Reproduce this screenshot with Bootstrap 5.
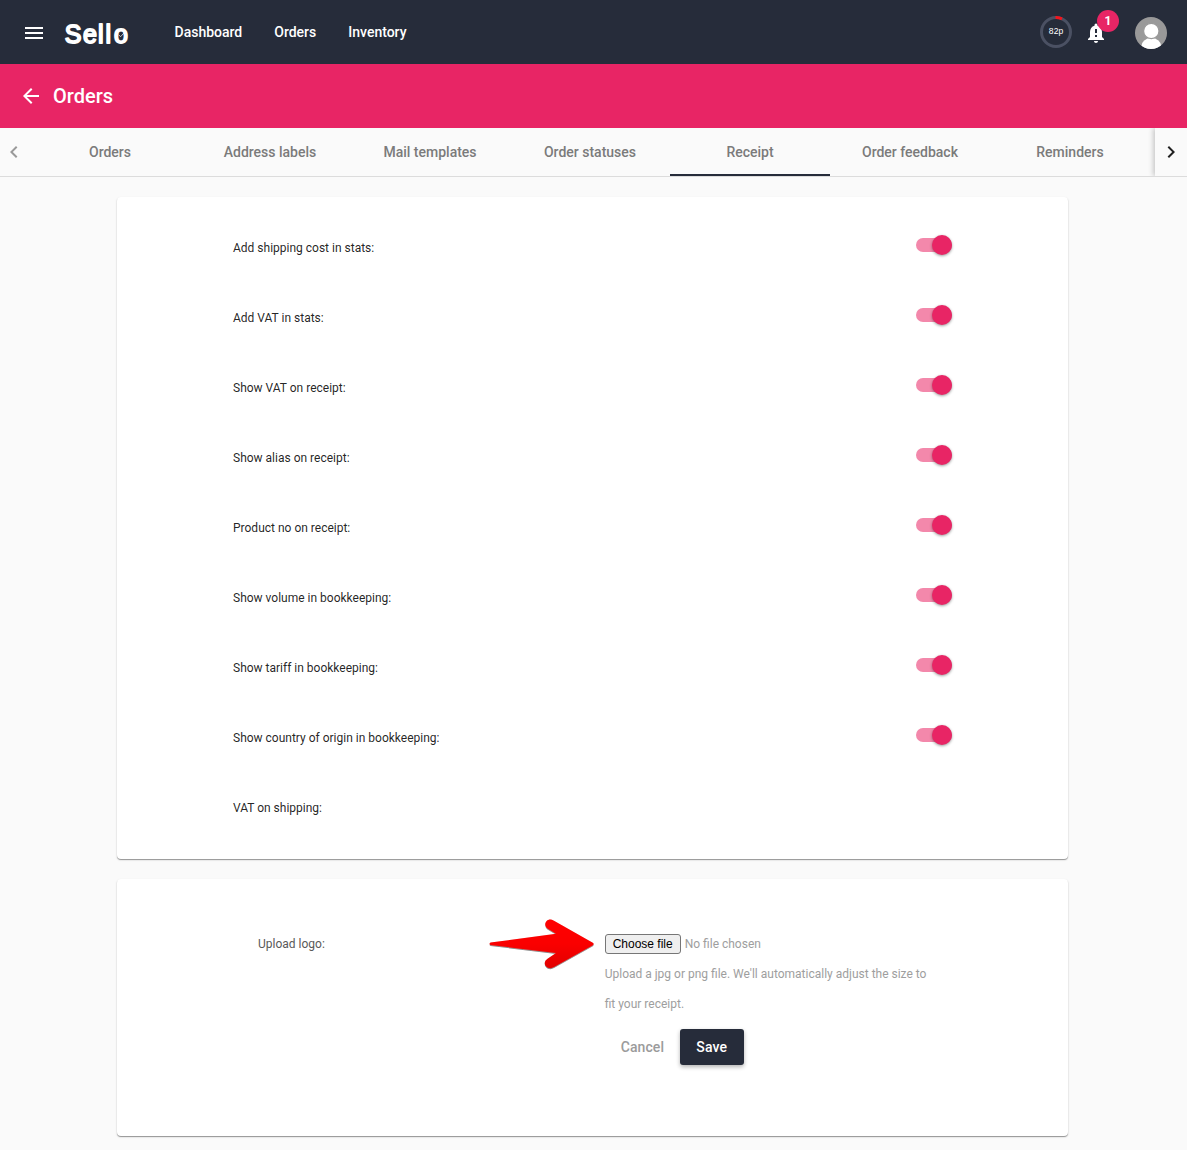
<!DOCTYPE html>
<html lang="en">
<head>
<meta charset="utf-8">
<meta name="viewport" content="width=device-width, initial-scale=1">
<title>Sello – Orders</title>
<link rel="stylesheet" href="https://cdn.jsdelivr.net/npm/bootstrap@5.3.0/dist/css/bootstrap.min.css">
<style>
:root{--navy:#262c3a;--pink:#e82565}
body{font-family:Roboto,"Liberation Sans",sans-serif;background:#fafafa;color:rgba(0,0,0,.87)}
svg{display:block;flex:none}
.topbar{height:64px;background:var(--navy);padding:0 20px 0 22px}
.topnav{gap:32px;margin-left:45.500px;font-size:14px;font-weight:500;line-height:20px}
.topnav .nav-link{color:#fff;padding:0}
.bell-box{width:24px;height:24px;margin-left:12px}
.count-badge{position:absolute;left:13px;top:-10px;width:22px;height:22px;background:var(--pink);font-size:12px;font-weight:700;line-height:22px}
.avatar{margin-left:27px;margin-top:2px}
.titlebar{height:64px;background:var(--pink);padding-left:19px}
.titlebar h1{font-size:20px;font-weight:500;margin:0 0 0 10px;line-height:24px}
.tabbar{height:49px;border-bottom:1px solid #dcdcdc}
.pager{width:30px}
.pager-next{width:32px;margin-left:auto;background:#fafafa;box-shadow:-2px 0 5px rgba(0,0,0,.2);clip-path:inset(0 0 0 -12px);position:relative}
.tabs{width:1125px}
.tabs .nav-link{flex:0 0 160px;width:160px;height:48px;line-height:48px;padding:0;text-align:center;font-size:14px;font-weight:500;color:#7b7b7b;border-radius:0}
.tabs .nav-link.active{border-bottom:2px solid var(--navy)}
main{padding-bottom:14px}
.panel{width:951px;margin-left:117px;background:#fff;border:0;border-radius:4px;box-shadow:0 1px 1px rgba(0,0,0,.38),0 1px 3px rgba(0,0,0,.08)}
.settings{margin-top:20px;height:662px;padding:16px 112px 16px 116px}
.option{height:70px;font-size:12px;line-height:20px}
.switch{width:36px;height:14px;margin-top:-6px;margin-right:4px;appearance:none;border-radius:7px;background:#f388ab;position:relative}
.switch::after{content:"";position:absolute;right:0;top:-3px;width:20px;height:20px;border-radius:50%;background:var(--pink);box-shadow:0 1px 3px rgba(0,0,0,.4)}
.upload{margin-top:20px;height:257px;padding:50px 0 0 141px;font-size:12px;line-height:30px}
.upload-label{width:231px;color:#595959}
.arrow-box{width:115.700px}
.upload-form{width:340px;color:#9e9e9e}
.file-row{height:30px;gap:4px}
.choose{font:12px/18px "Liberation Sans",sans-serif;width:76px;height:20px;padding:0;border:1px solid #767676;border-radius:3px;background:#efefef;color:#000}
.actions{margin-top:10px}
.actions .btn{height:36px;padding:0 16px;font-size:14px;font-weight:500;line-height:36px;border:0;border-radius:3px;letter-spacing:.1px}
.btn-cancel{color:#9b9b9b;width:75px}
.btn-save{background:var(--navy);color:#fff;width:64px;box-shadow:0 2px 4px rgba(0,0,0,.3)}
</style>
<script src="https://cdn.jsdelivr.net/npm/bootstrap@5.3.0/dist/js/bootstrap.bundle.min.js"></script>
</head>
<body>
<header class="topbar d-flex align-items-center">
  <svg width="24" height="24" viewBox="0 0 24 24" fill="#fff"><path transform="translate(0 1)" d="M3 18h18v-2H3v2zm0-5h18v-2H3v2zm0-7v2h18V6H3z"/></svg>
  <svg width="66" height="32" viewBox="0 0 66 32" style="margin-left:17px">
    <text x="1.800 20 34.900 42.400 50.900" y="26.800" font-family="Liberation Sans" font-size="25" fill="#fff" stroke="#fff" stroke-width="1.800" stroke-linejoin="round">Sello</text>
    <path d="M55.500 18.800l2.200 1.800 3.600-4" fill="none" stroke="#fff" stroke-width=".7"/>
  </svg>
  <nav class="topnav nav">
    <a class="nav-link" href="#">Dashboard</a><a class="nav-link" href="#">Orders</a><a class="nav-link" href="#">Inventory</a>
  </nav>
  <svg class="ms-auto" width="32" height="32" viewBox="0 0 32 32"><circle cx="16" cy="16" r="14.500" fill="none" stroke="#4b5163" stroke-width="3"/><path d="M15.500 1.500A14.500 14.500 0 0 1 22 2.800" fill="none" stroke="#f5141c" stroke-width="3"/><text x="16" y="18" text-anchor="middle" font-family="Liberation Sans" font-size="8.500" textLength="14.500" fill="#fff">82p</text></svg>
  <div class="bell-box position-relative">
    <svg width="24" height="24" viewBox="0 0 24 24" fill="#fff"><path transform="translate(0 1)" d="M12 22c1.100 0 2-.9 2-2h-4c0 1.100.9 2 2 2zm6-6v-5c0-3.070-1.630-5.640-4.500-6.320V4a1.500 1.500 0 0 0-3 0v.68C7.640 5.360 6 7.920 6 11v5l-2 2v1h16v-1l-2-2zm-5 0h-2v-2h2v2zm0-4h-2V8h2v4z"/></svg>
    <span class="count-badge rounded-circle text-white text-center">1</span>
  </div>
  <svg class="avatar" width="32" height="32" viewBox="0 0 32 32"><clipPath id="disc"><circle cx="16" cy="16" r="16"/></clipPath><g clip-path="url(#disc)"><path fill="#999" d="M0 0h32v32H0z"/><ellipse cx="16.300" cy="29.500" rx="10" ry="8.500" fill="#fff"/><circle cx="16.300" cy="14" r="7.700" fill="#fff" stroke="#999" stroke-width="1.200"/></g></svg>
</header>
<div class="titlebar d-flex align-items-center text-white">
  <svg width="24" height="24" viewBox="0 0 24 24" fill="#fff"><path d="M20 11H7.830l5.590-5.590L12 4l-8 8 8 8 1.410-1.410L7.830 13H20v-2z"/></svg>
  <h1>Orders</h1>
</div>
<div class="tabbar d-flex">
  <div class="pager d-flex align-items-center"><svg width="24" height="24" viewBox="0 0 24 24" fill="#999" style="margin-left:2px"><path d="M15.410 7.410L14 6l-6 6 6 6 1.410-1.410L10.830 12z"/></svg></div>
  <nav class="tabs nav flex-nowrap overflow-hidden">
    <a class="nav-link" href="#">Orders</a><a class="nav-link" href="#">Address labels</a><a class="nav-link" href="#">Mail templates</a><a class="nav-link" href="#">Order statuses</a><a class="nav-link active" href="#">Receipt</a><a class="nav-link" href="#">Order feedback</a><a class="nav-link" href="#">Reminders</a>
  </nav>
  <div class="pager-next d-flex align-items-center justify-content-center"><svg width="24" height="24" viewBox="0 0 24 24" fill="#212121"><path d="M10 6L8.590 7.410 13.170 12l-4.580 4.590L10 18l6-6z"/></svg></div>
</div>
<main>
  <section class="panel settings">
    <div class="option d-flex align-items-center justify-content-between"><label for="s1">Add shipping cost in stats:</label><input class="switch" type="checkbox" id="s1" checked></div>
    <div class="option d-flex align-items-center justify-content-between"><label for="s2">Add VAT in stats:</label><input class="switch" type="checkbox" id="s2" checked></div>
    <div class="option d-flex align-items-center justify-content-between"><label for="s3">Show VAT on receipt:</label><input class="switch" type="checkbox" id="s3" checked></div>
    <div class="option d-flex align-items-center justify-content-between"><label for="s4">Show alias on receipt:</label><input class="switch" type="checkbox" id="s4" checked></div>
    <div class="option d-flex align-items-center justify-content-between"><label for="s5">Product no on receipt:</label><input class="switch" type="checkbox" id="s5" checked></div>
    <div class="option d-flex align-items-center justify-content-between"><label for="s6">Show volume in bookkeeping:</label><input class="switch" type="checkbox" id="s6" checked></div>
    <div class="option d-flex align-items-center justify-content-between"><label for="s7">Show tariff in bookkeeping:</label><input class="switch" type="checkbox" id="s7" checked></div>
    <div class="option d-flex align-items-center justify-content-between"><label for="s8">Show country of origin in bookkeeping:</label><input class="switch" type="checkbox" id="s8" checked></div>
    <div class="option d-flex align-items-center"><label>VAT on shipping:</label></div>
  </section>
  <section class="panel upload d-flex align-items-start">
    <div class="upload-label">Upload logo:</div>
    <div class="arrow-box">
      <svg width="116" height="60" viewBox="0 0 116 60" style="margin-top:-15px"><defs><linearGradient id="red" x1="0" y1="0" x2="0" y2="1"><stop offset="0" stop-color="#f00"/><stop offset=".5" stop-color="#fa0000"/><stop offset="1" stop-color="#e20000"/></linearGradient><filter id="soft" x="-10%" y="-10%" width="120%" height="130%"><feDropShadow dx="0" dy=".8" stdDeviation=".7" flood-opacity=".6"/></filter></defs>
      <path filter="url(#soft)" fill="url(#red)" d="M1.500 28.500L67 19.800 58.500 14.500C54 11 57 4.800 62 5.500Q63.500 5.700 65 6.700L103.800 28.800Q105.500 30 103.800 31.200L65 53C60 56 55.300 52.500 55.800 48.500Q56 46.500 58.500 44.800L67 39 1.500 31Q-.5 29.800 1.500 28.500Z"/></svg>
    </div>
    <div class="upload-form">
      <div class="file-row d-flex align-items-center"><button type="button" class="choose">Choose file</button><span>No file chosen</span></div>
      <div>Upload a jpg or png file. We'll automatically adjust the size to<br>fit your receipt.</div>
      <div class="actions d-flex"><button type="button" class="btn btn-cancel">Cancel</button><button type="button" class="btn btn-save">Save</button></div>
    </div>
  </section>
</main>
</body>
</html>
